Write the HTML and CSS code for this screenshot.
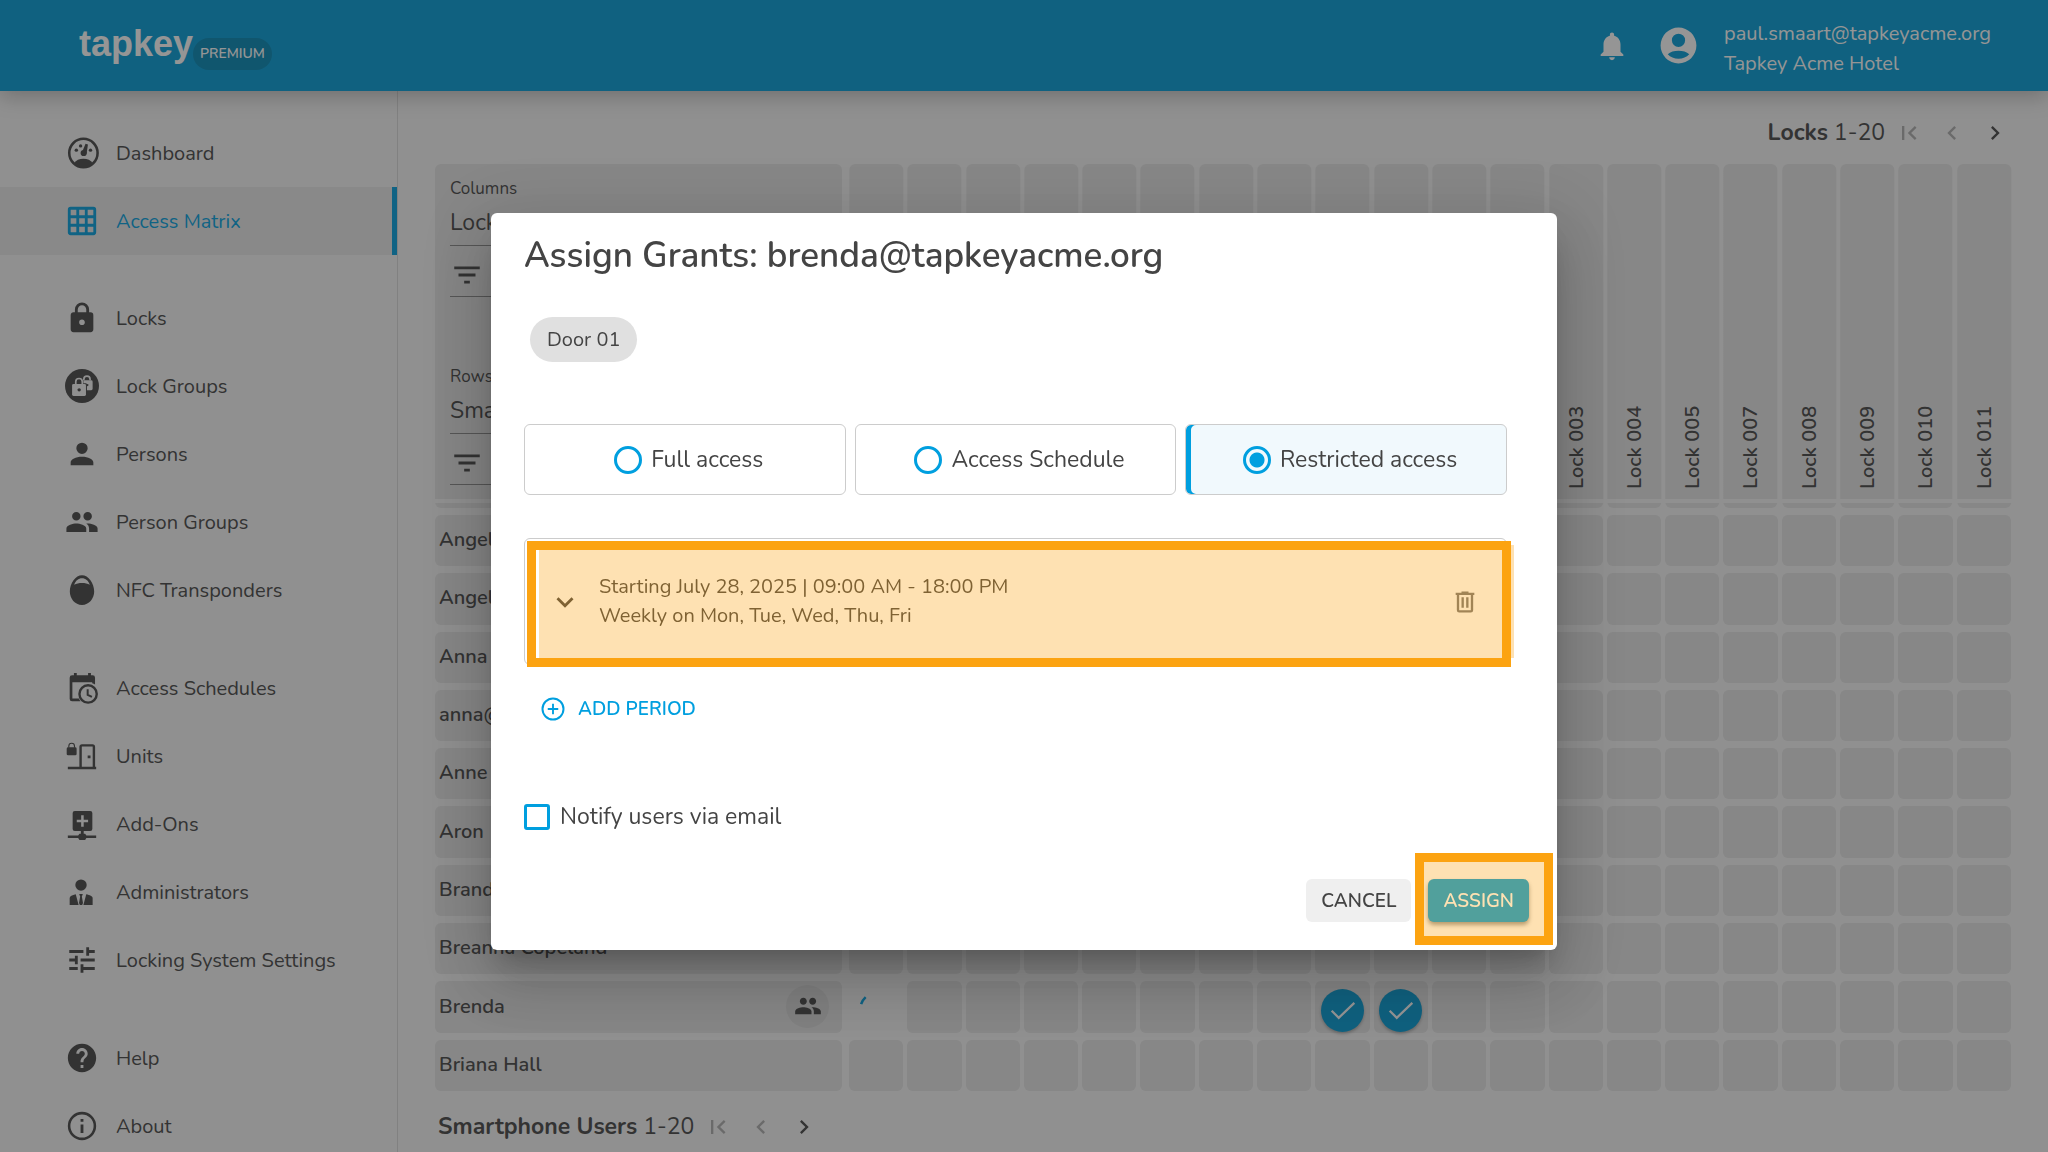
FILE: index.html
```html
<!DOCTYPE html>
<html lang="en">
  <head>
    <meta charset="utf-8">
    <title>Access Matrix</title>
    <link rel="stylesheet" href="styles.css">
  </head>
  <body>
    <header class="topbar">
      <a class="brand" href="#">
        <span class="logo">tapkey</span>
        <span class="plan">PREMIUM</span>
      </a>
      <div class="account">
        <button class="icon-btn" aria-label="Notifications">
          <svg class="icon" viewBox="0 0 24 24"><path d="M12 22c1.1 0 2-.9 2-2h-4c0 1.1.89 2 2 2zm6-6v-5c0-3.07-1.64-5.64-4.5-6.32V4c0-.83-.67-1.5-1.5-1.5s-1.5.67-1.5 1.5v.68C7.63 5.36 6 7.92 6 11v5l-2 2v1h16v-1l-2-2z"/></svg>
        </button>
        <button class="icon-btn" aria-label="Account">
          <svg class="icon icon-lg" viewBox="0 0 24 24"><path fill-rule="evenodd" d="M12 2a10 10 0 1 0 0 20 10 10 0 0 0 0-20zM12 5.400a3.700 3.700 0 1 1 0 7.400 3.700 3.700 0 0 1 0-7.400zM6 16.900c1.400-1.400 3.600-2 6-2s4.600.6 6 2c-1.500 1.600-3.600 2.500-6 2.500s-4.500-.9-6-2.500z"/></svg>
        </button>
        <div class="who">
          <div>paul.smaart@tapkeyacme.org</div>
          <div>Tapkey Acme Hotel</div>
        </div>
      </div>
    </header>

    <div class="page">
      <nav class="sidebar">
        <div class="nav-group">
          <a href="#"><svg class="icon" viewBox="0 0 24 24"><circle cx="13" cy="12" r="10" fill="none" stroke="currentColor" stroke-width="1.800"/><path d="M6.500 19.300c1.300-2.200 3.600-3.200 6.500-3.200s5.200 1 6.500 3.200c-1.700 1.700-4 2.700-6.500 2.700s-4.800-1-6.500-2.700z"/><circle cx="13.200" cy="12" r="2.200"/><path d="M12 11.500L14.500 5.500l1.700.5-1 6.500z"/><circle cx="8" cy="10" r="1.200"/><circle cx="11" cy="7" r="1.200"/><circle cx="18" cy="10" r="1.200"/></svg>Dashboard</a>
          <a href="#" class="active"><svg class="icon" viewBox="0 0 24 24"><path fill-rule="evenodd" d="M4 2h16a2 2 0 0 1 2 2v16a2 2 0 0 1-2 2H4a2 2 0 0 1-2-2V4a2 2 0 0 1 2-2zM4 4v4h4V4zM10 4v4h4V4zM16 4v4h4V4zM4 10v4h4v-4zM10 10v4h4v-4zM16 10v4h4v-4zM4 16v4h4v-4zM10 16v4h4v-4zM16 16v4h4v-4z"/></svg>Access Matrix</a>
        </div>
        <div class="nav-group">
          <a href="#"><svg class="icon" viewBox="0 0 24 24"><path d="M12,17A2,2 0 0,0 14,15C14,13.89 13.1,13 12,13A2,2 0 0,0 10,15A2,2 0 0,0 12,17M18,8A2,2 0 0,1 20,10V20A2,2 0 0,1 18,22H6A2,2 0 0,1 4,20V10C4,8.89 4.9,8 6,8H7V6A5,5 0 0,1 12,1A5,5 0 0,1 17,6V8H18M12,3A3,3 0 0,0 9,6V8H15V6A3,3 0 0,0 12,3Z"/></svg>Locks</a>
          <a href="#"><svg class="icon" viewBox="0 0 24 24"><circle cx="12" cy="12" r="12"/><g class="cut-line"><path d="M13.300 8V7.200a2.200 2.200 0 0 1 4.400 0V8"/><path d="M7.600 11V9a2.300 2.300 0 0 1 4.600 0v2"/></g><path class="cut" d="M13 8h5.500a1 1 0 0 1 1 1v5a1 1 0 0 1-1 1H15.500v-4a1 1 0 0 0-1-1H13z"/><rect class="cut" x="5" y="10.500" width="9.800" height="8.500" rx="1"/><circle cx="10" cy="14.700" r="1.200"/><circle cx="15.800" cy="11.300" r=".8"/></svg>Lock Groups</a>
          <a href="#"><svg class="icon" viewBox="0 0 24 24"><path d="M12,4A4,4 0 0,1 16,8A4,4 0 0,1 12,12A4,4 0 0,1 8,8A4,4 0 0,1 12,4M12,14C16.42,14 20,15.79 20,18V20H4V18C4,15.79 7.58,14 12,14Z"/></svg>Persons</a>
          <a href="#"><svg class="icon" viewBox="0 0 24 24"><path d="M16 11c1.66 0 2.99-1.34 2.99-3S17.66 5 16 5c-1.66 0-3 1.34-3 3s1.34 3 3 3zm-8 0c1.66 0 2.99-1.34 2.99-3S9.66 5 8 5C6.34 5 5 6.34 5 8s1.34 3 3 3zm0 2c-2.33 0-7 1.17-7 3.500V19h14v-2.500c0-2.330-4.670-3.500-7-3.500zm8 0c-.29 0-.62.02-.97.05 1.160.84 1.970 1.970 1.970 3.450V19h6v-2.500c0-2.330-4.670-3.500-7-3.500z"/></svg>Person Groups</a>
          <a href="#"><svg class="icon" viewBox="0 0 24 24"><path fill-rule="evenodd" d="M12 1.500c4.500 0 8.600 5.500 8.600 11.500 0 5-3.600 9.500-8.600 9.500S3.400 18 3.400 13C3.400 7 7.500 1.500 12 1.500zM6.500 8.300c3-1.700 8-1.700 11 0-1-3-3-4.600-5.500-4.600S7.500 5.300 6.500 8.300z"/></svg>NFC Transponders</a>
        </div>
        <div class="nav-group">
          <a href="#"><svg class="icon" viewBox="0 0 24 24"><path d="M6.300 1.400h2V3h8V1.400h2V3h1.200a1.700 1.700 0 0 1 1.700 1.700v4.800a9 9 0 0 0-2-.9V8H5.200v11.400h4.600a8 8 0 0 0 1.200 2H5a1.700 1.700 0 0 1-1.700-1.700v-15A1.700 1.700 0 0 1 5 3h1.300z"/><circle cx="16.300" cy="16.200" r="6.100" fill="none" stroke="currentColor" stroke-width="1.700"/><path d="M16 12.800v4l3 1.500" fill="none" stroke="currentColor" stroke-width="1.400"/></svg>Access Schedules</a>
          <a href="#"><svg class="icon" viewBox="0 0 24 24"><rect x="1.200" y="5.900" width="7" height="5.600" rx="1"/><path d="M2.700 6.200V5a2 2 0 0 1 4 0v1.200" fill="none" stroke="currentColor" stroke-width=".8"/><path d="M11 20V5.500a1 1 0 0 1 1-1h7.400a1 1 0 0 1 1 1V20" fill="none" stroke="currentColor" stroke-width="1.700"/><path d="M2 19.600h20v1.800H2zM16 11.600h2v2h-2z"/></svg>Units</a>
          <a href="#"><svg class="icon" viewBox="0 0 24 24"><path fill-rule="evenodd" d="M6.900 2.800h10.900a1.500 1.500 0 0 1 1.500 1.500v11.200a1.500 1.500 0 0 1-1.500 1.500H13.200v1.800h1l.9 1.400H22v1.700h-6.900l-.9 1.400h-4l-.9-1.400H2v-1.700h7.300l.9-1.400h1V17H6.900a1.500 1.500 0 0 1-1.500-1.500V4.300a1.500 1.500 0 0 1 1.500-1.500zM11.400 5.900v3.100H8.300v1.800h3.100v3.100h1.800v-3.100h3.100V9h-3.100V5.900z"/></svg>Add-Ons</a>
          <a href="#"><svg class="icon" viewBox="0 0 24 24"><circle cx="11.300" cy="7.100" r="4"/><path d="M7.600 13.600l2 7.600H3.300v-5c0-1.200 1.800-2.100 4.300-2.600zM15 13.600l-2 7.600h6.500v-5c0-1.200-2-2.100-4.500-2.600zM10 13.400h2.600l-.7 1.800.8 4.500-.6 1.500h-1.600l-.6-1.500.8-4.500z"/></svg>Administrators</a>
          <a href="#"><svg class="icon" viewBox="0 0 24 24"><path d="M3 17v2h6v-2H3zM3 5v2h10V5H3zm10 16v-2h8v-2h-8v-2h-2v6h2zM7 9v2H3v2h4v2h2V9H7zm14 4v-2H11v2h10zm-6-4h2V7h4V5h-4V3h-2v6z"/></svg>Locking System Settings</a>
        </div>
        <div class="nav-group">
          <a href="#"><svg class="icon" viewBox="0 0 24 24"><path d="M12 2C6.48 2 2 6.48 2 12s4.48 10 10 10 10-4.48 10-10S17.52 2 12 2zm1 17h-2v-2h2v2zm2.070-7.750l-.9.92C13.450 12.900 13 13.500 13 15h-2v-.5c0-1.100.45-2.100 1.170-2.830l1.240-1.260c.37-.36.59-.86.59-1.410 0-1.100-.9-2-2-2s-2 .9-2 2H8c0-2.210 1.790-4 4-4s4 1.790 4 4c0 .88-.36 1.680-.93 2.250z"/></svg>Help</a>
          <a href="#"><svg class="icon" viewBox="0 0 24 24"><circle cx="12" cy="12" r="9.100" fill="none" stroke="currentColor" stroke-width="1.800"/><path d="M11 11h2v6h-2zM11 7h2v2h-2z"/></svg>About</a>
        </div>
      </nav>

      <main class="content">
        <div class="pager pager-top">
          <span><b>Locks</b> 1-20</span>
          <div class="pager-btns">
            <button disabled aria-label="First locks"><svg viewBox="0 0 24 24"><path d="M18.410 16.590L13.820 12l4.590-4.590L17 6l-6 6 6 6zM6 6h2v12H6z"/></svg></button>
            <button disabled aria-label="Previous locks"><svg viewBox="0 0 24 24"><path d="M15.410 7.410L14 6l-6 6 6 6 1.410-1.410L10.830 12z"/></svg></button>
            <button aria-label="Next locks"><svg viewBox="0 0 24 24"><path d="M10 6L8.590 7.410 13.170 12l-4.580 4.590L10 18l6-6z"/></svg></button>
          </div>
        </div>

        <table class="matrix">
          <thead>
            <tr id="locks">
              <td class="corner">
                <div class="axis">
                  <label for="columns">Columns</label>
                  <select id="columns"><option>Locks</option></select>
                  <button class="filter" aria-label="Filter columns"><svg class="icon" viewBox="0 0 24 24"><path d="M10 18h4v-2h-4v2zM3 6v2h18V6H3zm3 7h12v-2H6v2z"/></svg></button>
                </div>
                <div class="axis">
                  <label for="rows">Rows</label>
                  <select id="rows"><option>Smartphone Users</option></select>
                  <button class="filter" aria-label="Filter rows"><svg class="icon" viewBox="0 0 24 24"><path d="M10 18h4v-2h-4v2zM3 6v2h18V6H3zm3 7h12v-2H6v2z"/></svg></button>
                </div>
              </td>
            </tr>
          </thead>
          <tbody id="users"></tbody>
        </table>

        <div class="pager">
          <span><b>Smartphone Users</b> 1-20</span>
          <div class="pager-btns">
            <button disabled aria-label="First users"><svg viewBox="0 0 24 24"><path d="M18.410 16.590L13.820 12l4.590-4.590L17 6l-6 6 6 6zM6 6h2v12H6z"/></svg></button>
            <button disabled aria-label="Previous users"><svg viewBox="0 0 24 24"><path d="M15.410 7.410L14 6l-6 6 6 6 1.410-1.410L10.830 12z"/></svg></button>
            <button aria-label="Next users"><svg viewBox="0 0 24 24"><path d="M10 6L8.590 7.410 13.170 12l-4.580 4.590L10 18l6-6z"/></svg></button>
          </div>
        </div>
      </main>
    </div>

    <div class="backdrop">
      <form class="dialog" role="dialog" aria-labelledby="dialog-title">
        <h1 id="dialog-title">Assign Grants: brenda@tapkeyacme.org</h1>
        <span class="chip">Door 01</span>

        <div class="options">
          <label class="option"><input type="radio" name="access">Full access</label>
          <label class="option"><input type="radio" name="access">Access Schedule</label>
          <label class="option selected"><input type="radio" name="access" checked>Restricted access</label>
        </div>

        <div class="period marked">
          <button type="button" class="plain-btn" aria-label="Expand"><svg class="icon" viewBox="0 0 24 24"><path d="M7.410 8.590L12 13.170l4.590-4.580L18 10l-6 6-6-6z"/></svg></button>
          <div class="period-text">
            <div>Starting July 28, 2025 | 09:00 AM - 18:00 PM</div>
            <div>Weekly on Mon, Tue, Wed, Thu, Fri</div>
          </div>
          <button type="button" class="plain-btn" aria-label="Delete"><svg class="icon icon-sm" viewBox="0 0 24 24"><path fill-rule="evenodd" d="M9 3v1H4v2h1v13a2 2 0 0 0 2 2h10a2 2 0 0 0 2-2V6h1V4h-5V3H9zM7 6h10v13H7V6zM9 8v9h2V8H9zM13 8v9h2V8h-2z"/></svg></button>
        </div>

        <button type="button" class="add-period"><svg class="icon icon-sm" viewBox="0 0 24 24"><circle cx="12" cy="12" r="9" fill="none" stroke="currentColor" stroke-width="1.700"/><path d="M11.200 7.500h1.600v3.700h3.700v1.600h-3.700v3.700h-1.600v-3.700H7.500v-1.600h3.700z"/></svg>ADD PERIOD</button>

        <label class="notify"><input type="checkbox">Notify users via email</label>

        <div class="actions">
          <button type="button" class="btn">CANCEL</button>
          <div class="marked">
            <button type="submit" class="btn btn-primary">ASSIGN</button>
          </div>
        </div>
      </form>
    </div>

    <script src="script.js"></script>
  </body>
</html>
```

FILE: styles.css
```css
:root {
  --blue: #009fdf;
  --text: #444;
  --mark: #fca311;
}
* {
  box-sizing: border-box;
}
body {
  margin: 0;
  height: 100vh;
  display: flex;
  flex-direction: column;
  overflow: hidden;
  background: #f5f5f5;
  color: var(--text);
  font-family: Nunito, Lato, sans-serif;
  font-size: 20px;
}
button, select, input {
  font: inherit;
  color: inherit;
  margin: 0;
}
button {
  padding: 0;
  border: 0;
  background: none;
}
svg {
  fill: currentColor;
  display: block;
}
.icon {
  width: 34px;
  height: 34px;
  flex: none;
  overflow: visible;
}
.icon-lg {
  width: 43px;
  height: 43px;
}
.icon-sm {
  width: 28px;
  height: 28px;
}

/* top bar */
.topbar {
  height: 91px;
  flex: none;
  display: flex;
  align-items: center;
  justify-content: space-between;
  padding: 0 57px 0 79px;
  background: #009cd6;
  color: #fff;
  position: relative;
  z-index: 1;
  box-shadow: 0 5px 20px rgba(0, 0, 0, 0.25);
}
.brand {
  display: flex;
  align-items: flex-end;
  color: inherit;
  text-decoration: none;
}
.logo {
  font: bold 36px/46px "Liberation Sans", sans-serif;
  padding-bottom: 3px;
}
.plan {
  padding: 0 7px;
  border-radius: 16px;
  background: #0086b5;
  font-size: 14px;
  line-height: 32px;
  font-weight: 600;
}
.account {
  display: flex;
  align-items: center;
}
.icon-btn {
  margin-right: 28px;
}
.icon-btn + .icon-btn {
  margin-right: 24px;
}
.who {
  line-height: 30px;
  padding-top: 6px;
}

.page {
  flex: 1;
  min-height: 0;
  display: flex;
}

/* side navigation */
.sidebar {
  width: 398px;
  flex: none;
  padding-top: 28px;
  border-right: 1px solid #d8d8d8;
}
.nav-group {
  margin-bottom: 29px;
}
.nav-group + .nav-group {
  margin-bottom: 30px;
}
.nav-group a {
  display: flex;
  align-items: center;
  gap: 17px;
  height: 68px;
  padding-left: 65px;
  color: var(--text);
  text-decoration: none;
}
.nav-group a.active {
  color: var(--blue);
  background: #e8e8e8;
  border-right: 5px solid var(--blue);
}
.cut {
  fill: #f5f5f5;
}
.cut-line {
  fill: none;
  stroke: #f5f5f5;
  stroke-width: 1.2;
}

/* matrix */
.content {
  flex: 1;
  min-width: 0;
  display: flex;
  flex-direction: column;
  padding: 0 37px;
}
.pager {
  height: 61px;
  padding: 10px 0 0 3px;
  flex: none;
  display: flex;
  align-items: center;
  gap: 2px;
  font-size: 23px;
}
.pager-top {
  height: 73px;
  justify-content: flex-end;
  margin-right: -5px;
}
.pager-btns {
  display: flex;
}
.pager-btns button {
  width: 43px;
  height: 43px;
  display: grid;
  place-items: center;
}
.pager-btns button:disabled {
  opacity: 0.4;
}
.pager-btns svg {
  width: 28px;
  height: 28px;
}
.matrix {
  flex: 1;
  min-height: 0;
  display: grid;
  grid-template-columns: 410px repeat(20, minmax(0, 1fr));
  grid-template-rows: 344px;
  grid-auto-rows: 1fr;
  gap: 7px 4px;
}
.matrix thead, .matrix tbody, .matrix tr {
  display: contents;
}
.matrix td, .matrix th {
  padding: 0;
  border-radius: 6px;
  background: #e4e4e4;
}
.matrix thead td, .matrix thead th {
  background: linear-gradient(#e4e4e4 335px, #f5f5f5 335px, #f5f5f5 339px, #e4e4e4 339px);
}
.matrix .corner, .matrix tbody th {
  margin-right: 3px;
}
.matrix .corner {
  padding: 13px 15px 0;
}
.matrix thead th {
  writing-mode: vertical-rl;
  transform: rotate(180deg);
  display: flex;
  align-items: center;
  padding-top: 19px;
  font-weight: 600;
  background: linear-gradient(#e4e4e4 5px, #f5f5f5 5px, #f5f5f5 9px, #e4e4e4 9px);
}
.matrix tbody th {
  display: flex;
  align-items: center;
  justify-content: space-between;
  padding: 0 13px 2px 4px;
  font-weight: 600;
}
.matrix tbody td {
  display: grid;
  place-items: center;
}
.matrix td.busy {
  background: none;
}
.axis {
  margin-bottom: 68px;
}
.axis label {
  display: block;
  font-size: 17px;
  line-height: 24px;
}
.axis select {
  appearance: none;
  width: 100%;
  height: 45px;
  padding: 0 0 2px;
  border: 0;
  border-bottom: 1px solid #888;
  background: none;
  font-size: 23px;
}
.filter {
  width: 100%;
  height: 51px;
  display: flex;
  align-items: center;
  padding-top: 7px;
  border-bottom: 1px solid #888;
}
.groups {
  width: 43px;
  height: 43px;
  display: grid;
  place-items: center;
  border-radius: 50%;
  background: #d8d8d8;
}
.grant {
  width: 43px;
  height: 43px;
  display: grid;
  place-items: center;
  margin-top: 6px;
  border-radius: 50%;
  background: #009cd6;
  color: #fff;
  box-shadow: 0 2px 3px rgba(0, 0, 0, 0.25);
}

/* dialog */
.backdrop {
  position: fixed;
  inset: 0;
  z-index: 2;
  display: flex;
  align-items: center;
  justify-content: center;
  padding-top: 11px;
  background: rgba(33, 33, 33, 0.48);
}
.dialog {
  width: 1066px;
  max-width: 90%;
  padding: 22px 50px 28px 33px;
  border-radius: 6px;
  background: #fff;
  box-shadow: 0 16px 21px -10px rgba(0, 0, 0, 0.2), 0 34px 54px 4px rgba(0, 0, 0, 0.14), 0 13px 65px 11px rgba(0, 0, 0, 0.12);
}
.dialog h1 {
  margin: 0 0 40px;
  font-size: 35px;
  line-height: 42px;
  font-weight: 600;
}
.chip {
  display: inline-block;
  margin-left: 6px;
  padding: 0 17px;
  border-radius: 23px;
  background: #e0e0e0;
  line-height: 45px;
}
.options {
  display: grid;
  grid-template-columns: repeat(3, 1fr);
  gap: 9px;
  margin: 62px 0 43px;
}
.option {
  display: flex;
  align-items: center;
  justify-content: center;
  gap: 9px;
  height: 71px;
  padding-left: 8px;
  border: 1px solid #ccc;
  border-radius: 6px;
  font-size: 23px;
}
.option.selected {
  background: #f1f9fd;
  box-shadow: inset 5px 0 var(--blue);
}
.option input {
  appearance: none;
  width: 28px;
  height: 28px;
  border: 3px solid var(--blue);
  border-radius: 50%;
}
.option input:checked {
  background: radial-gradient(circle, var(--blue) 7px, transparent 8px);
}
.period {
  display: flex;
  align-items: center;
  height: 127px;
  padding: 0 27px 0 23px;
  border: 1px solid #ccc;
  border-radius: 6px;
}
.period-text {
  flex: 1;
  padding: 0 0 2px 17px;
  line-height: 29px;
}
.plain-btn {
  color: #444;
}
.plain-btn .icon-sm {
  color: #777;
}

/* orange frame with a tinted fill over the marked control */
.marked {
  position: relative;
}
.marked::before, .marked::after {
  content: "";
  position: absolute;
  pointer-events: none;
}
.marked::before {
  inset: 6px -8px 6px 14px;
  background: var(--mark);
  opacity: 0.32;
}
.marked::after {
  inset: 2px -5px -3px 2px;
  border: 9px solid var(--mark);
}
.actions .marked::before {
  inset: -25px -23px -22px -12px;
}
.actions .marked::after {
  inset: -26px -24px -23px -13px;
}

.add-period {
  display: flex;
  align-items: center;
  gap: 11px;
  height: 43px;
  margin: 22px 0 73px 15px;
  color: var(--blue);
  font-size: 19px;
  font-weight: 600;
}
.notify {
  display: flex;
  align-items: center;
  gap: 10px;
  font-size: 23px;
  line-height: 28px;
}
.notify input {
  appearance: none;
  width: 26px;
  height: 26px;
  border: 3px solid var(--blue);
  border-radius: 3px;
}
.actions {
  display: flex;
  justify-content: flex-end;
  gap: 17px;
  margin: 48px -22px 0 0;
}
.btn {
  height: 43px;
  padding: 0 15px;
  border-radius: 6px;
  background: #efefef;
  font-size: 19px;
  font-weight: 600;
}
.btn-primary {
  background: var(--blue);
  color: #fff;
  box-shadow: 0 3px 4px rgba(0, 0, 0, 0.4);
}
```

FILE: script.js
```js
const locks = ["Door 01", "Door 02", "Door 03", "Door 04", "Door 05", "Door 06", "Door 07", "Door 08", "Door 09", "Door 10", "Lock 001", "Lock 002",
  "Lock 003", "Lock 004", "Lock 005", "Lock 007", "Lock 008", "Lock 009", "Lock 010", "Lock 011"];
const users = ["Angela", "Angelica", "Anna B", "anna@", "Anne M", "Aron", "Brandon", "Breanna Copeland", "Brenda", "Briana Hall"];

const groupIcon = '<button class="groups" aria-label="Groups"><svg class="icon icon-sm" viewBox="0 0 24 24"><path d="M16 11c1.66 0 2.99-1.34 2.99-3S17.66 5 16 5c-1.66 0-3 1.34-3 3s1.34 3 3 3zm-8 0c1.66 0 2.99-1.34 2.99-3S9.66 5 8 5C6.34 5 5 6.34 5 8s1.34 3 3 3zm0 2c-2.33 0-7 1.17-7 3.5V19h14v-2.5c0-2.33-4.67-3.5-7-3.5zm8 0c-.29 0-.62.02-.97.05 1.16.84 1.97 1.97 1.97 3.45V19h6v-2.5c0-2.33-4.67-3.5-7-3.5z"/></svg></button>';
const checkIcon = '<button class="grant" aria-label="Granted"><svg class="icon" viewBox="0 0 24 24"><path d="M4 12.500l5 5L20 7" fill="none" stroke="currentColor" stroke-width="1.600"/></svg></button>';
// short arc of the loading spinner
const spinner = '<svg class="icon" viewBox="0 0 24 24"><path d="M1.500 10q1-3 3.200-5" fill="none" stroke="#009fdf" stroke-width="1.800"/></svg>';

locks.forEach((name) => {
  const th = document.createElement("th");
  th.scope = "col";
  th.textContent = name;
  document.querySelector("#locks").append(th);
});

users.forEach((name) => {
  const tr = document.createElement("tr");
  const isBrenda = name === "Brenda";
  tr.innerHTML = '<th scope="row">' + name + (isBrenda ? groupIcon : "") + "</th>";
  locks.forEach((lock, i) => {
    const td = document.createElement("td");
    if (isBrenda && i === 0) {
      td.className = "busy";
      td.innerHTML = spinner;
    }
    if (isBrenda && (i === 8 || i === 9)) {
      td.innerHTML = checkIcon;
    }
    tr.append(td);
  });
  document.querySelector("#users").append(tr);
});
```
